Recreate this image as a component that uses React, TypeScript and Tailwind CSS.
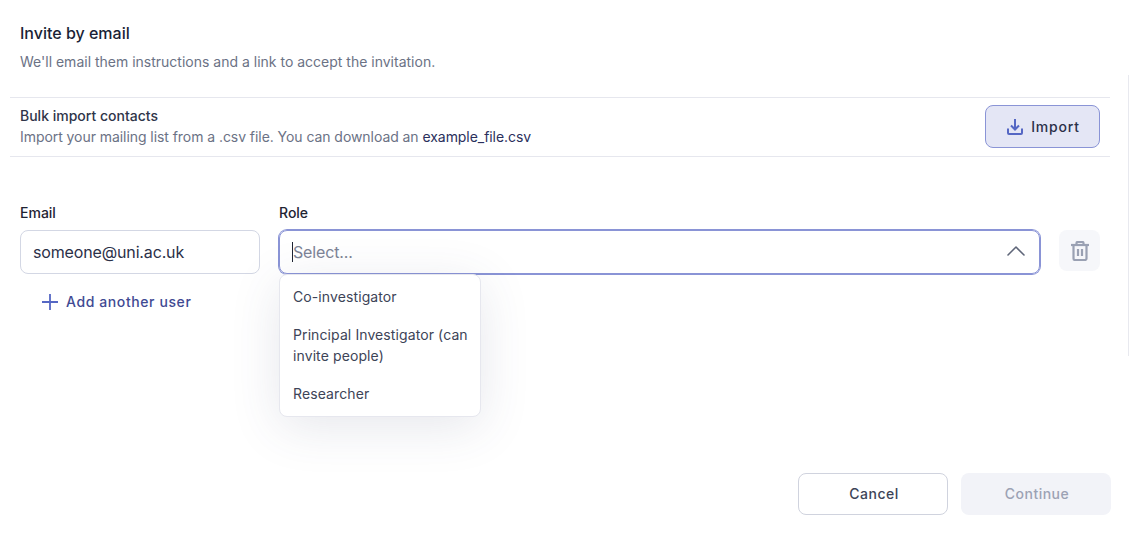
import { ChevronUp } from "lucide-react";

const roles = ["Co-investigator", "Principal Investigator (can invite people)", "Researcher"];

function TrashIcon() {
  return (
    <svg width="18" height="20" viewBox="0 0 18 20" fill="none" stroke="#9aa1b3" strokeWidth="2.2">
      <path d="M0 4h18" />
      <path d="M5.5 4V2a1 1 0 0 1 1-1h5a1 1 0 0 1 1 1v2" />
      <path d="M2.5 4v13.5a1.5 1.5 0 0 0 1.5 1.5h10a1.5 1.5 0 0 0 1.5-1.5V4" />
      <path d="M7 8v7M11 8v7" />
    </svg>
  );
}

function ImportIcon() {
  return (
    <svg width="16" height="16" viewBox="0 0 16 16" fill="none" stroke="#5567c4" strokeWidth="2">
      <path d="M8 0v10.5" />
      <path d="M4 6.5l4 4 4-4" />
      <path d="M1 9.5V14a1 1 0 0 0 1 1h12a1 1 0 0 0 1-1V9.5" />
    </svg>
  );
}

function PlusIcon() {
  return (
    <svg width="16" height="16" viewBox="0 0 16 16" fill="none" stroke="#5567c4" strokeWidth="1.8">
      <path d="M8 0v16M0 8h16" />
    </svg>
  );
}

export default function App() {
  return (
    <div className="relative w-[1129px] h-[534px] overflow-hidden bg-white font-['Inter',sans-serif]">
      <div className="absolute right-0 top-[75px] h-[281px] w-px bg-[#e8e9ef]" />

      <div className="px-5 pt-[23px] h-[97px]">
        <h2 className="text-base leading-5 font-medium text-[#1a1f36]">Invite by email</h2>
        <p className="mt-[9px] text-sm leading-5 text-[#6b7285]">
          We'll email them instructions and a link to accept the invitation.
        </p>
      </div>

      <div className="ml-2.5 w-[1100px] h-[60px] border-y border-[#e6e7ee] flex items-center justify-between pl-2.5 pr-2.5">
        <div className="-mt-0.5">
          <div className="text-sm leading-[18px] font-medium text-[#2f3549]">Bulk import contacts</div>
          <div className="mt-[3px] text-sm leading-[18px] tracking-[-0.06px] text-[#6b7285]">
            Import your mailing list from a .csv file. You can download an{" "}
            <a className="text-[#2a2f5c]">example_file.csv</a>
          </div>
        </div>
        <button className="-mt-0.5 pl-0.5 pt-0.5 w-[115px] h-[43px] rounded-lg border border-[#8a94d6] bg-[#e4e6f5] flex items-center justify-center gap-2 text-sm font-medium tracking-[0.8px] text-[#2b3048]">
          <ImportIcon />
          Import
        </button>
      </div>

      <div className="mt-[46px] pl-5 flex gap-[19px]">
        <div className="w-60">
          <label className="block text-sm leading-5 font-medium text-[#1f2433]">Email</label>
          <div className="mt-[7px] h-11 rounded-lg border border-[#d3d7e4] flex items-center pl-3 text-base tracking-[-0.15px] text-[#2b3048]">
            someone@uni.ac.uk
          </div>
          <button className="mt-[18px] ml-[22px] flex items-center gap-2 text-sm leading-5 font-medium tracking-[0.6px] text-[#3f4a93]">
            <PlusIcon />
            Add another user
          </button>
        </div>

        <div className="relative w-[761px]">
          <label className="block text-sm leading-5 font-medium text-[#1f2433]">Role</label>
          <div className="mt-[7px] h-11 rounded-lg border border-[#8a94d6] ring-1 ring-[#8a94d6] flex items-center justify-between pl-3 pr-[7px]">
            <span className="flex items-center text-base tracking-[-0.15px] text-[#7d8496]">
              <span className="h-[20px] w-px bg-[#1f2433]" />
              Select...
            </span>
            <ChevronUp size={32} strokeWidth={1.2} className="-mt-0.5 text-[#5f6679]" />
          </div>
          <div className="absolute left-0 top-[71px] w-[202px] h-[143px] rounded-lg border border-[#e6e7ee] bg-white pt-0.5 pl-[13px] pr-2 shadow-[0_10px_50px_rgba(60,66,110,0.13)]">
            {roles.map((r) => (
              <div key={r} className="py-[8.5px] text-sm leading-[21px] tracking-[0.1px] text-[#3d4457]">
                {r}
              </div>
            ))}
          </div>
        </div>

        <div className="pt-[27px]">
          <div className="w-[41px] h-[41px] rounded-lg bg-[#f6f7fa] flex items-center justify-center">
            <TrashIcon />
          </div>
        </div>
      </div>

      <div className="absolute right-[18px] bottom-[19px] flex gap-[13px]">
        <button className="pl-0.5 w-[150px] h-[42px] rounded-lg border border-[#d0d3de] bg-white text-sm font-medium tracking-[0.5px] text-[#3d4457]">
          Cancel
        </button>
        <button className="pl-0.5 w-[150px] h-[42px] rounded-lg bg-[#f2f3f8] text-sm font-medium tracking-[0.5px] text-[#9ca2b4]">
          Continue
        </button>
      </div>
    </div>
  );
}
